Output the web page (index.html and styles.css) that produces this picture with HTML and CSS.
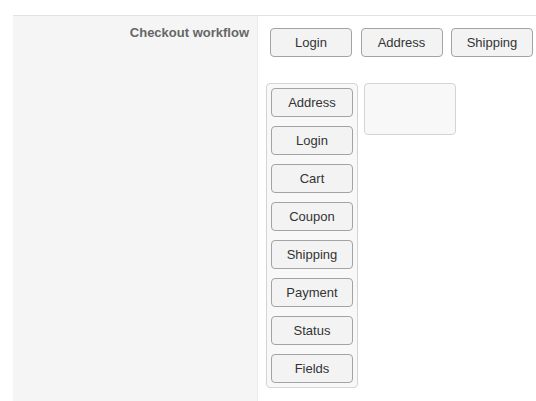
FILE: index.html
```html
<!DOCTYPE html>
<html>
<head>
<meta charset="utf-8">
<link rel="stylesheet" href="styles.css">
</head>
<body>
<div class="page">
  <div class="row">
    <div class="label">Checkout workflow</div>
    <div class="field">
      <div class="steps">
        <button class="btn">Login</button>
        <button class="btn">Address</button>
        <button class="btn">Shipping</button>
      </div>
      <div class="lists">
        <div class="pool">
          <button class="btn">Address</button>
          <button class="btn">Login</button>
          <button class="btn">Cart</button>
          <button class="btn">Coupon</button>
          <button class="btn">Shipping</button>
          <button class="btn">Payment</button>
          <button class="btn">Status</button>
          <button class="btn">Fields</button>
        </div>
        <div class="drop"></div>
      </div>
    </div>
  </div>
</div>
</body>
</html>
```
FILE: styles.css
```css
html, body {
  margin: 0;
  padding: 0;
  background: #fff;
  font-family: "Liberation Sans", Arial, sans-serif;
}
.page {
  padding: 15px 0 0 13px;
  height: 386px;
}
.row {
  display: flex;
  border-top: 1px solid #e2e2e2;
  height: 100%;
}
.label {
  width: 236px;
  flex: none;
  background: #f5f5f5;
  border-right: 1px solid #ebebeb;
  padding: 9px 8px 0 0;
  text-align: right;
  font-weight: bold;
  font-size: 13px;
  color: #666;
}
.field {
  flex: 1;
  padding: 12px 0 0 8px;
}
.steps {
  display: flex;
  gap: 8.5px;
  padding-left: 4px;
}
.btn {
  box-sizing: border-box;
  width: 82px;
  height: 29px;
  margin: 0;
  padding: 0 0 1px;
  border: 1px solid #a3a3a3;
  border-radius: 4px;
  background: #f3f3f3;
  font-family: "Liberation Sans", Arial, sans-serif;
  font-size: 13px;
  color: #333;
}
.lists {
  display: flex;
  align-items: flex-start;
  gap: 6px;
  margin-top: 26px;
}
.pool {
  display: flex;
  flex-direction: column;
  gap: 9px;
  padding: 4px;
  border: 1px solid #d4d4d4;
  border-radius: 4px;
  background: #f8f8f8;
}
.drop {
  box-sizing: border-box;
  width: 92px;
  height: 52px;
  border: 1px solid #d4d4d4;
  border-radius: 4px;
  background: #f8f8f8;
}
```
